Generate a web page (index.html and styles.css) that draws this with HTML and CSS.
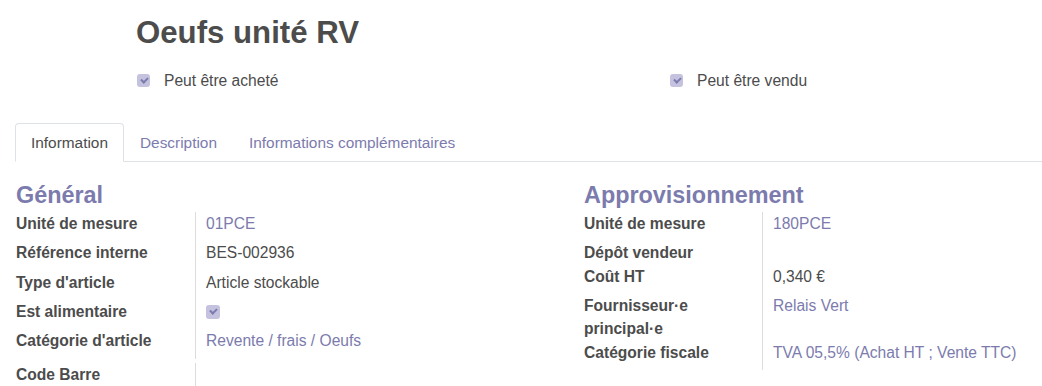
FILE: index.html
```html
<!DOCTYPE html>
<html lang="fr">
  <head>
    <meta charset="UTF-8" />
    <meta name="viewport" content="width=device-width, initial-scale=1.0" />
    <title>Oeufs unité RV</title>
    <link rel="stylesheet" href="styles.css">
  </head>
  <body>
    <div class="sheet">
      <div class="title">
        <h1>Oeufs unité RV</h1>
        <div class="options">
          <div class="option">
            <span class="check"></span>
            <span>Peut être acheté</span>
          </div>
          <div class="option">
            <span class="check"></span>
            <span>Peut être vendu</span>
          </div>
        </div>
      </div>

      <ul class="tabs">
        <li class="tab active">Information</li>
        <li class="tab">Description</li>
        <li class="tab">Informations complémentaires</li>
      </ul>

      <div class="groups">
        <div class="group">
          <h2>Général</h2>
          <div class="row">
            <div class="label">Unité de mesure</div>
            <div class="value"><span class="field link">01PCE</span></div>
          </div>
          <div class="row">
            <div class="label">Référence interne</div>
            <div class="value"><span class="field">BES-002936</span></div>
          </div>
          <div class="row">
            <div class="label">Type d'article</div>
            <div class="value"><span class="field">Article stockable</span></div>
          </div>
          <div class="row">
            <div class="label">Est alimentaire</div>
            <div class="value"><span class="field"><span class="check small"></span></span></div>
          </div>
          <div class="row">
            <div class="label">Catégorie d'article</div>
            <div class="value"><span class="field link">Revente / frais / Oeufs</span></div>
          </div>
          <div class="row spaced">
            <div class="label">Code Barre</div>
            <div class="value"></div>
          </div>
        </div>

        <div class="group">
          <h2>Approvisionnement</h2>
          <div class="row">
            <div class="label">Unité de mesure</div>
            <div class="value"><span class="field link">180PCE</span></div>
          </div>
          <div class="row">
            <div class="label">Dépôt vendeur</div>
            <div class="value"></div>
          </div>
          <div class="row">
            <div class="label">Coût HT</div>
            <div class="value"><span class="field">0,340 €</span></div>
          </div>
          <div class="row">
            <div class="label">Fournisseur·e principal·e</div>
            <div class="value"><span class="field link">Relais Vert</span></div>
          </div>
          <div class="row">
            <div class="label">Catégorie fiscale</div>
            <div class="value"><span class="field link">TVA 05,5% (Achat HT ; Vente TTC)</span></div>
          </div>
        </div>
      </div>
    </div>
  </body>
</html>
```

FILE: styles.css
```css
body {
  margin: 0;
  font-family: "Liberation Sans", Arial, sans-serif;
  font-size: 15.6px;
  line-height: 23.4px;
  color: #4c4c4c;
  background-color: white;
}

.sheet {
  padding: 14px 0 0 15px;
}

.title {
  padding-left: 121px;
}

h1 {
  margin: 0;
  font-size: 31.2px;
  line-height: 38px;
  font-weight: bold;
  color: #4c4c4c;
}

.options {
  display: grid;
  grid-template-columns: 533px 1fr;
  margin-top: 17px;
}

.option {
  display: flex;
  align-items: center;
  gap: 14px;
  padding-left: 1px;
}

.check {
  display: inline-block;
  position: relative;
  width: 13px;
  height: 13px;
  border-radius: 3px;
  background-color: #c4c2de;
}

.check::after {
  content: "";
  position: absolute;
  left: 4px;
  top: 3px;
  width: 5px;
  height: 3px;
  border-left: 2px solid #7c7bad;
  border-bottom: 2px solid #7c7bad;
  transform: rotate(-45deg);
}

.check.small {
  width: 14px;
  height: 14px;
  margin-top: 5px;
  vertical-align: top;
}

.tabs {
  display: flex;
  list-style: none;
  margin: 31px 0 0 0;
  padding: 0;
  border-bottom: 1px solid #dee2e6;
  font-size: 15.4px;
}

.tab {
  padding: 7px 15px 6px;
  border: 1px solid transparent;
  border-top-left-radius: 4px;
  border-top-right-radius: 4px;
  margin-bottom: -1px;
  color: #7c7bad;
}

.tab.active {
  color: #4c4c4c;
  background-color: white;
  border-color: #dee2e6 #dee2e6 white;
}

.groups {
  display: grid;
  grid-template-columns: 568px 1fr;
  padding-left: 1px;
  margin-top: 19px;
}

h2 {
  margin: 0 0 3px;
  font-size: 23.4px;
  line-height: 28px;
  font-weight: bold;
  color: #7c7bad;
}

.row {
  display: grid;
  grid-template-columns: 180px 1fr;
}

.group + .group .row {
  grid-template-columns: 179px 1fr;
}

.row.spaced {
  margin-top: 4px;
}

.label {
  font-weight: bold;
  border-right: 1px solid #dcdcdc;
  padding-right: 20px;
}

.value {
  padding-left: 10px;
}

.field {
  display: inline-block;
  padding-bottom: 6px;
  vertical-align: top;
}

.link {
  color: #7c7bad;
}
```
